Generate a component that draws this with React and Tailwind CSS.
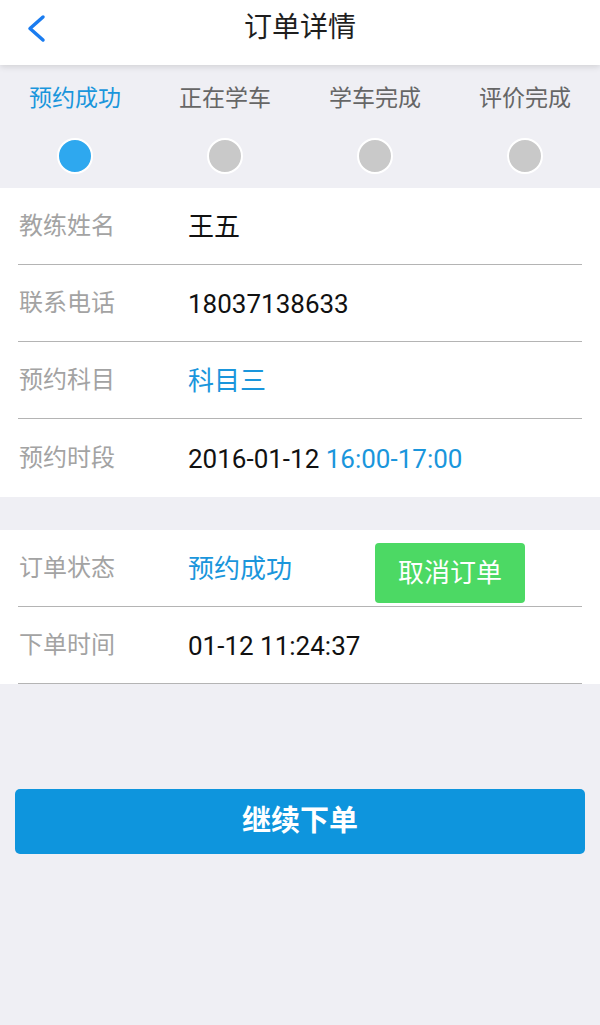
import React from 'react'

const font = { fontFamily: 'Roboto, "Noto Sans CJK SC", sans-serif' }

const steps = [
  { label: '预约成功', active: true },
  { label: '正在学车', active: false },
  { label: '学车完成', active: false },
  { label: '评价完成', active: false },
]

function Row({ label, last, children }) {
  return (
    <div
      className={`mx-[18px] h-[77px] flex items-center ${last ? 'h-[78px]' : 'border-b-[1.5px] border-[#b4b4b4]'}`}
    >
      <div className="w-[170px] pl-px text-[24px] text-[#a3a3a3]">{label}</div>
      {children}
    </div>
  )
}

export default function App() {
  return (
    <div className="min-h-[1025px] bg-[#efeff4]" style={font}>
      {/* Header */}
      <div className="relative z-10 h-[65px] bg-white flex items-center justify-center shadow-[0_2px_6px_rgba(0,0,0,0.12)]">
        <svg className="absolute left-[26px] top-[14px]" width="22" height="30" viewBox="0 0 22 30">
          <polyline
            points="17,3 4,14.5 17,26"
            fill="none"
            stroke="#1a7cf0"
            strokeWidth="3.5"
            strokeLinecap="round"
            strokeLinejoin="round"
          />
        </svg>
        <h1 className="text-[28px] text-[#1e1e1e] leading-none -mt-[10px]">订单详情</h1>
      </div>

      {/* Progress steps */}
      <div className="grid grid-cols-4 pt-[17px] pb-[14px]">
        {steps.map((s) => (
          <div key={s.label} className="flex flex-col items-center">
            <div className={`text-[23px] leading-[34px] ${s.active ? 'text-[#1a96dc]' : 'text-[#666]'}`}>
              {s.label}
            </div>
            <div
              className={`mt-[22px] w-[36px] h-[36px] rounded-full border-2 border-white ${s.active ? 'bg-[#2ea8ef]' : 'bg-[#c9c9c9]'}`}
            />
          </div>
        ))}
      </div>

      {/* Order info */}
      <div className="bg-white">
        <Row label="教练姓名">
          <span className="text-[26px] text-[#111] mt-[3px]">王五</span>
        </Row>
        <Row label="联系电话">
          <span className="text-[26px] text-[#111] mt-[3px]">18037138633</span>
        </Row>
        <Row label="预约科目">
          <span className="text-[26px] text-[#1a96dc] mt-[3px]">科目三</span>
        </Row>
        <Row label="预约时段" last>
          <span className="text-[26px] text-[#111] mt-[3px]">
            2016-01-12 <span className="text-[#1a96dc]">16:00-17:00</span>
          </span>
        </Row>
      </div>

      <div className="h-[33px]" />

      <div className="bg-white">
        <Row label="订单状态">
          <span className="w-[187px] text-[26px] text-[#1a96dc] mt-[3px]">预约成功</span>
          <button className="w-[150px] h-[60px] mt-[10px] rounded-[4px] bg-[#4cd964] text-white text-[26px]">
            取消订单
          </button>
        </Row>
        <Row label="下单时间">
          <span className="text-[26px] text-[#111] mt-[3px]">01-12 11:24:37</span>
        </Row>
      </div>

      <div className="px-[15px] pt-[105px]">
        <button className="w-full h-[65px] rounded-[5px] bg-[#0e95dd] text-white text-[29px] font-bold">
          继续下单
        </button>
      </div>
    </div>
  )
}
